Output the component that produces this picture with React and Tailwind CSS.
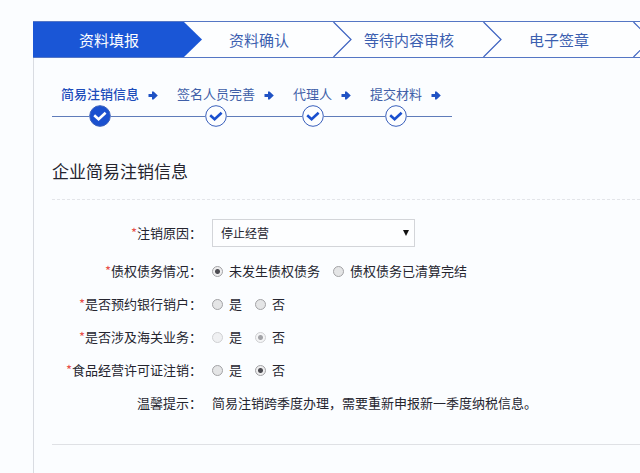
import React from 'react';

const stages = ['资料填报', '资料确认', '等待内容审核', '电子签章', ''];
const steps = ['简易注销信息', '签名人员完善', '代理人', '提交材料'];

function Chevron({ filled }) {
  return (
    <svg
      className="absolute top-0 left-full z-10 h-[35px] w-[19px]"
      viewBox="0 0 19 35"
      fill={filled ? '#1a56d6' : 'none'}
      stroke={filled ? 'none' : '#3c62c0'}
      strokeWidth="1.2"
      aria-hidden="true"
    >
      <path d={filled ? 'M0 0H1L19 17.5L1 35H0Z' : 'M0.5 0L18 17.5L0.5 35'} />
    </svg>
  );
}

function Arrow() {
  return (
    <svg className="ml-[9px] h-[9px] w-[10px]" viewBox="0 0 10 9" aria-hidden="true">
      <path d="M0.5 3H4V0.5H5.5L9.8 4.5L5.5 8.5H4V6H0.5Z" fill="#1f52c4" />
    </svg>
  );
}

function Check({ active }) {
  return (
    <svg className="size-[22px] shrink-0" viewBox="0 0 22 22" aria-hidden="true">
      <circle cx="11" cy="11" r="10.3" fill={active ? '#1a50cf' : '#fdfeff'} stroke="#3a60bc" strokeWidth="1" />
      <path
        d="M5.2 10.2L9.6 14.2L16.6 7.8"
        fill="none"
        stroke={active ? '#ffffff' : '#1a50cf'}
        strokeWidth="2.6"
      />
    </svg>
  );
}

function StageBar() {
  return (
    <ol className="flex overflow-hidden border-y border-[#5576c4] bg-[#fdfeff] text-[15px] leading-[35px] text-[#3c5fb0]">
      {stages.map((name, i) => (
        <li
          key={i}
          aria-current={i === 0 ? 'step' : undefined}
          className={
            'relative h-[35px] w-[150px] shrink-0 pl-[2px] text-center ' + (i === 0 ? 'bg-[#1a56d6] text-white' : '')
          }
        >
          {name}
          {i < stages.length - 1 && <Chevron filled={i === 0} />}
        </li>
      ))}
    </ol>
  );
}

function Steps() {
  return (
    <ol className="flex">
      <li className="flex w-[9px] items-end pb-[10px]" aria-hidden="true">
        <span className="h-px w-full bg-[#5f7cba]" />
      </li>
      {steps.map((name, i) => (
        <li
          key={name}
          className={i === steps.length - 1 ? 'grid grid-cols-[auto_30px]' : 'grid grid-cols-[auto_38px]'}
        >
          <span
            className={
              'text-[13px] leading-[22px] ' + (i === 0 ? 'font-medium text-[#1d4cba]' : 'text-[#3f5fa8]')
            }
          >
            {name}
          </span>
          <span className="flex items-center pt-[3px]">
            <Arrow />
          </span>
          <span className="flex items-center">
            <span className="h-px flex-1 bg-[#5f7cba]" />
            <Check active={i === 0} />
            <span className="h-px flex-1 bg-[#5f7cba]" />
          </span>
          <span className="flex items-center">
            <span className="h-px flex-1 bg-[#5f7cba]" />
          </span>
        </li>
      ))}
    </ol>
  );
}

function RadioRow({ label, name, options, selected, disabled }) {
  return (
    <div role="radiogroup" aria-labelledby={name + '-label'} className="flex h-[33px] items-center">
      <span id={name + '-label'} className="w-[150px] shrink-0 text-right">
        <span className="text-[#e8504a]">*</span>
        {label}：
      </span>
      <div className="ml-[10px] flex gap-[13px]">
        {options.map((option) => (
          <label key={option} className="flex items-center gap-[6px]">
            <input
              type="radio"
              name={name}
              defaultChecked={option === selected}
              disabled={disabled}
              className="mt-[2px] size-[11px] appearance-none rounded-full border border-[#a3a3a6] bg-[#e4e5e6] checked:bg-[radial-gradient(circle,#4c4c52_0_2px,#eeeeef_3px)] disabled:opacity-50"
            />
            {option}
          </label>
        ))}
      </div>
    </div>
  );
}

export default function App() {
  return (
    <div className="flex min-h-screen flex-col bg-[#fbfdff] pt-[21px] pl-[33px] font-['Noto_Sans_CJK_SC',sans-serif] text-[13px] leading-[20px] text-[#25252f]">
      <StageBar />
      <main className="flex-1 border-l border-[#d9dce2] pl-[18px]">
        <div className="pt-[25px]">
          <Steps />
        </div>
        <form>
          <h1 className="mt-8 border-b border-dashed border-[#e3e5e9] pb-4 text-[17px] leading-6">
            企业简易注销信息
          </h1>
          <div className="mt-[19px] mb-[7px] flex items-center">
            <label htmlFor="reason" className="w-[150px] shrink-0 text-right">
              <span className="text-[#e8504a]">*</span>注销原因：
            </label>
            <div className="ml-[10px] grid w-[203px] items-center">
              <select
                id="reason"
                className="col-start-1 row-start-1 h-7 w-full appearance-none border border-[#d3d5d9] bg-[#fdfeff] px-2 text-[12px]"
              >
                <option>停止经营</option>
              </select>
              <svg
                className="pointer-events-none col-start-1 row-start-1 mr-[6px] h-[6px] w-[6px] justify-self-end"
                viewBox="0 0 6 6"
                aria-hidden="true"
              >
                <path d="M0 0H6L3 6Z" fill="#111" />
              </svg>
            </div>
          </div>
          <RadioRow label="债权债务情况" name="debt" options={['未发生债权债务', '债权债务已清算完结']} selected="未发生债权债务" />
          <RadioRow label="是否预约银行销户" name="bank" options={['是', '否']} />
          <RadioRow label="是否涉及海关业务" name="customs" options={['是', '否']} selected="否" disabled />
          <RadioRow label="食品经营许可证注销" name="food" options={['是', '否']} selected="否" />
          <div className="flex h-[33px] items-center">
            <span className="w-[150px] shrink-0 text-right">温馨提示：</span>
            <p className="ml-[10px]">简易注销跨季度办理，需要重新申报新一季度纳税信息。</p>
          </div>
          <hr className="mt-[25px] border-[#dfe1e5]" />
        </form>
      </main>
    </div>
  );
}
